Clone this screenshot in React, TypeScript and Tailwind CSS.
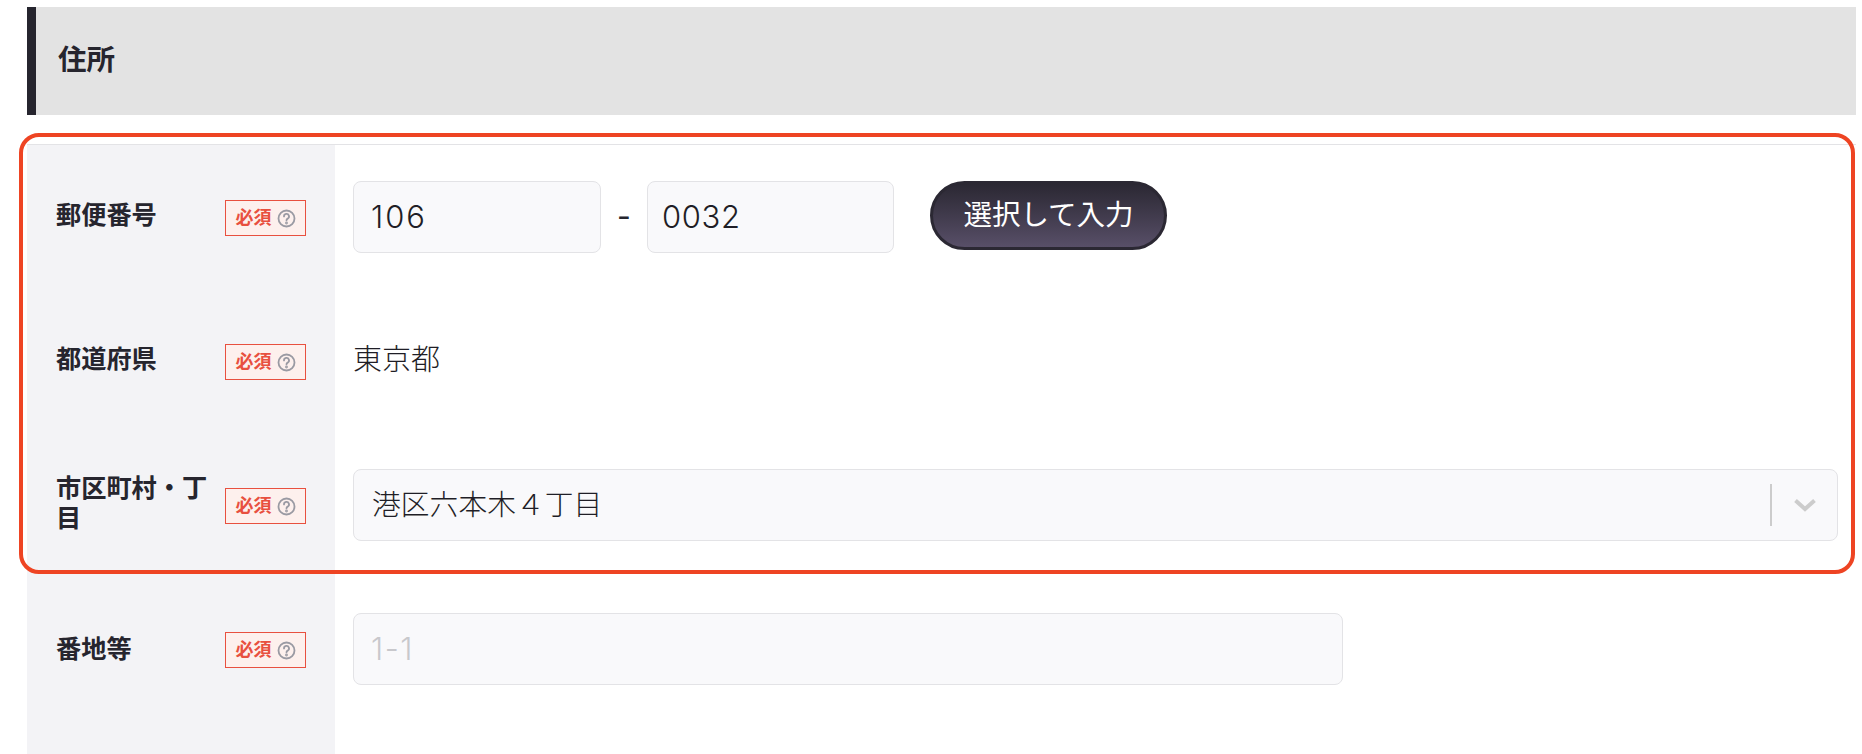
const jp = 'font-["Inter","Noto_Sans_CJK_JP",sans-serif]';

function RequiredBadge() {
  return (
    <span className="mt-[2px] flex h-[36px] w-[81px] flex-shrink-0 items-center justify-center gap-[5px] border border-[#e8503f] bg-[#fdf0ed]">
      <span className="text-[18px] leading-none font-bold text-[#e8503f]">必須</span>
      <svg width="19" height="19" viewBox="0 0 19 19" fill="none" stroke="#9a9aa3" strokeWidth="1.8" strokeLinecap="round">
        <circle cx="9.5" cy="9.5" r="8" />
        <path d="M7 7.4a2.5 2.5 0 1 1 3.7 2.2c-.8.4-1.2.9-1.2 1.7" />
        <circle cx="9.5" cy="14" r=".5" fill="#9a9aa3" />
      </svg>
    </span>
  );
}

function Row({ label, labelCls = 'mb-[4px]', children }: { label: string; labelCls?: string; children?: React.ReactNode }) {
  return (
    <div className="flex h-[144px] flex-shrink-0">
      <div className="flex w-[308px] flex-shrink-0 items-center bg-[#f3f3f6] pl-[29px]">
        <div className={`w-[169px] pr-[8px] text-[25.2px] leading-[30px] font-bold text-[#26252e] ${labelCls}`}>{label}</div>
        <RequiredBadge />
      </div>
      <div className="flex flex-1 items-center pl-[18px] pr-[18px]">{children}</div>
    </div>
  );
}

const inputCls =
  'h-[72px] rounded-[8px] border border-[#e3e3e6] bg-[#f9f9fb] pb-[2px] text-[31px] font-light text-[#1f1e26] placeholder:text-[#c8c8cc] outline-none';

export default function App() {
  return (
    <div className={`relative h-[754px] w-[1862px] overflow-hidden bg-white ${jp}`}>
      <div className="flex h-full flex-col pt-[7px] pl-[27px] pr-[6px]">
        <div className="flex h-[108px] flex-shrink-0 items-center border-l-[9px] border-[#26252e] bg-[#e3e3e3] pl-[22px]">
          <h2 className="mb-[1px] text-[28.5px] font-bold text-[#26252e]">住所</h2>
        </div>

        <div className="mt-[29px] flex flex-1 flex-col border-t border-[#e3e3e6]">
          <Row label="郵便番号">
            <input readOnly value="106" className={`w-[248px] px-[17px] tracking-[2px] ${inputCls}`} />
            <span className="mb-[2px] w-[46px] text-center text-[30px] text-[#26252e]">-</span>
            <input readOnly value="0032" className={`w-[247px] px-[14px] tracking-[0.6px] ${inputCls}`} />
            <button className="mb-[4px] ml-[36px] h-[69px] w-[237px] rounded-full border-[3px] border-[#2b2833] bg-gradient-to-b from-[#2b2833] to-[#584f68] text-[28.5px] text-white">
              選択して入力
            </button>
          </Row>
          <Row label="都道府県">
            <span className="mb-[2px] text-[29px] font-light text-[#1f1e26]">東京都</span>
          </Row>
          <Row label="市区町村・丁目">
            <div className="flex h-[72px] flex-1 items-center rounded-[8px] border border-[#e3e3e6] bg-[#f9f9fb] pl-[18px]">
              <span className="flex-1 text-[28.8px] font-light text-[#1f1e26]">港区六本木４丁目</span>
              <span className="h-[42px] w-[2px] bg-[#cccccc]" />
              <span className="flex w-[65px] items-center justify-center">
                <svg width="22" height="14" viewBox="0 0 22 14" fill="none" stroke="#cccccc" strokeWidth="4">
                  <path d="M1.5 2.5 11 11l9.5-8.5" />
                </svg>
              </span>
            </div>
          </Row>
          <Row label="番地等" labelCls="mb-[1px]">
            <input readOnly placeholder="1-1" className={`w-[990px] px-[17px] tracking-[1.5px] ${inputCls}`} />
          </Row>
          <div className="w-[308px] flex-1 bg-[#f3f3f6]" />
        </div>
      </div>

      {/* red callout round the first three rows */}
      <div className="pointer-events-none absolute top-[133px] left-[19px] h-[441px] w-[1836px] rounded-[20px] border-4 border-[#ee4423]" />
    </div>
  );
}
